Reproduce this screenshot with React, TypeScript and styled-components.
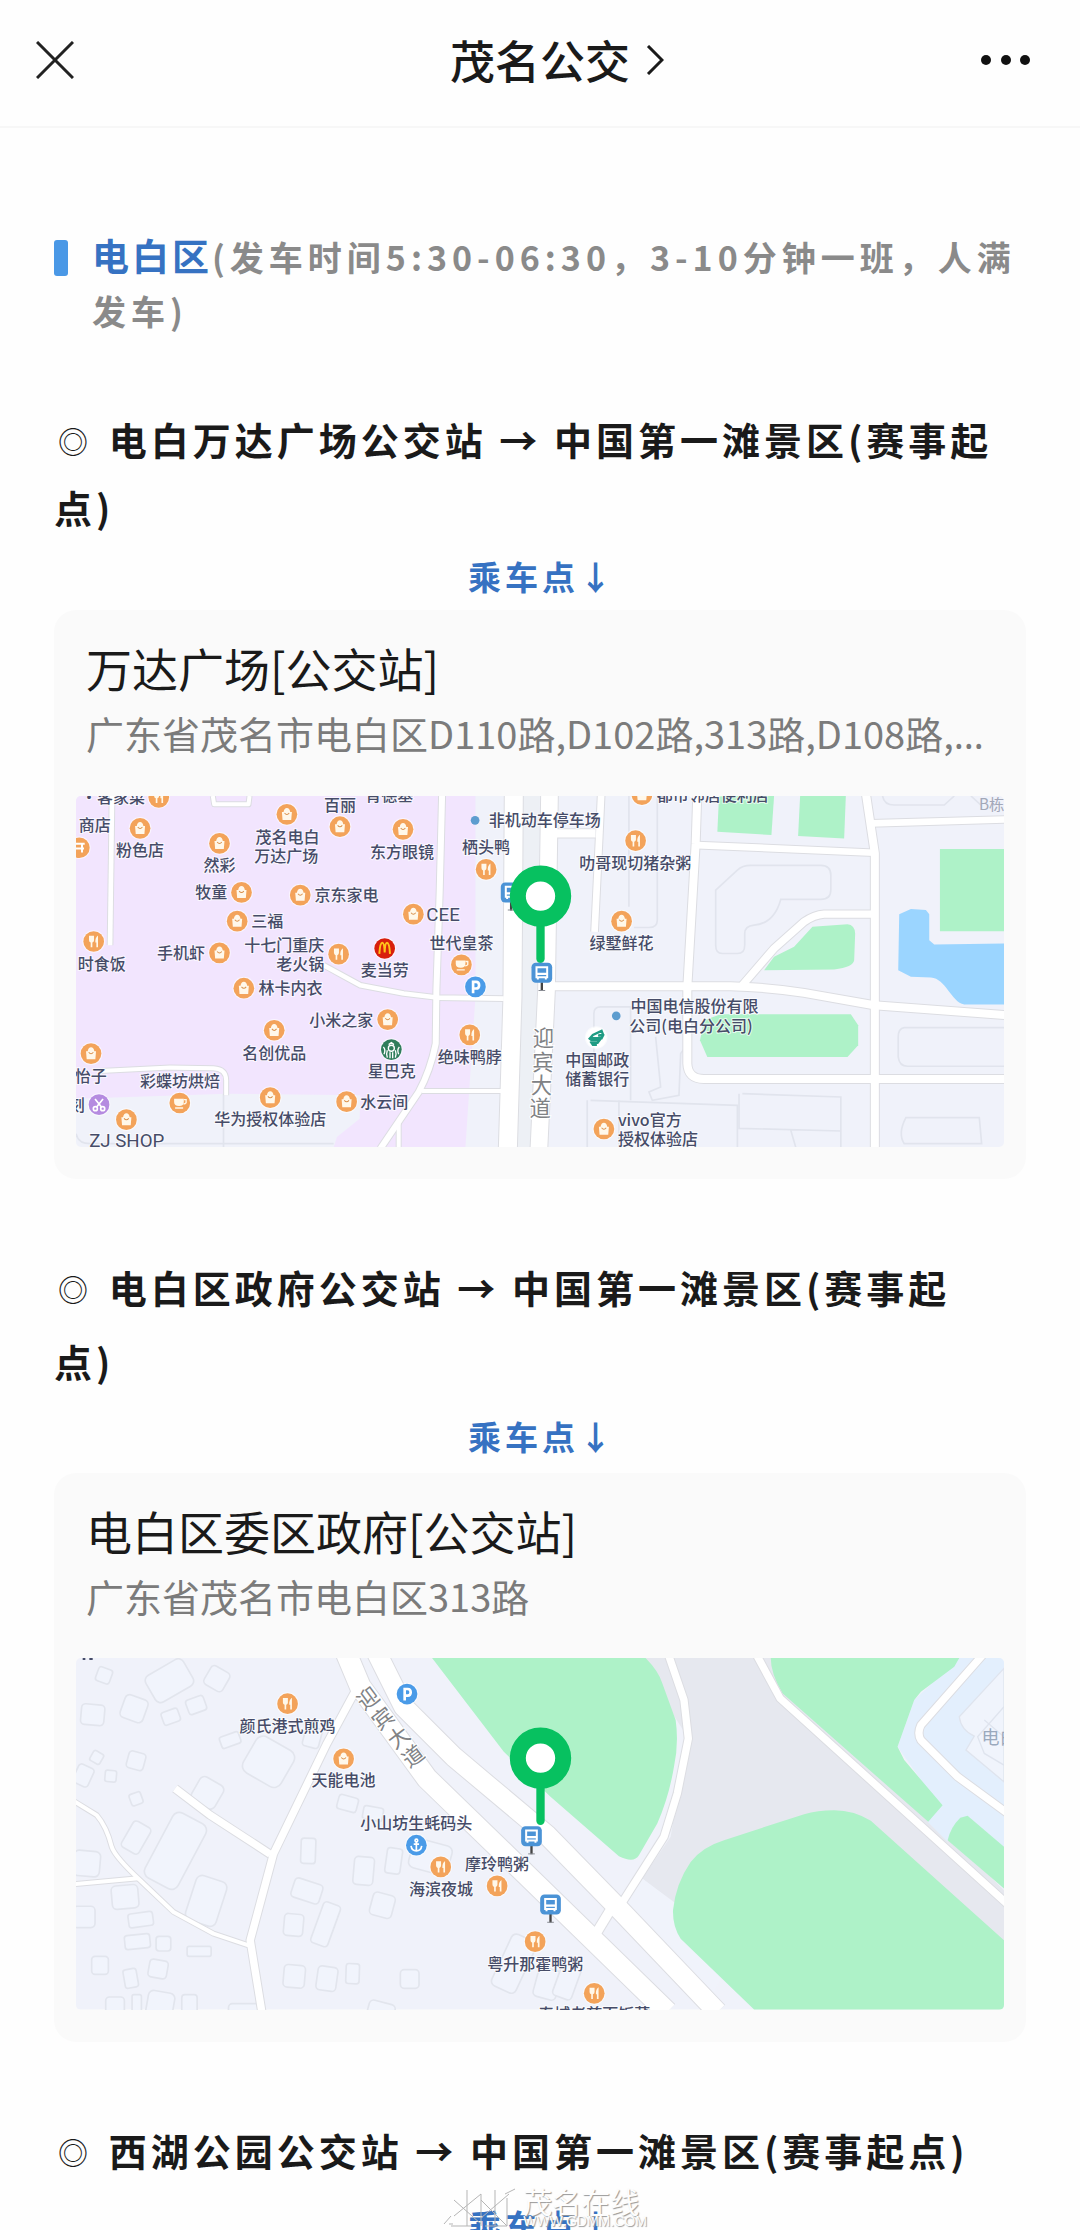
import React from "react";
import styled, { createGlobalStyle } from "styled-components";

const GlobalStyle = createGlobalStyle`
  * { box-sizing: border-box; }
  body {
    margin: 0;
    background: #fefefe;
    color: #1a1a1a;
    font-family: "Noto Sans CJK SC", "Noto Sans", sans-serif;
  }
  h1, h2, h3, p { margin: 0; }
  button { border: 0; background: none; font: inherit; color: inherit; cursor: pointer; }
`;

const Screen = styled.div`
  position: relative;
  display: flex;
  flex-direction: column;
  height: 100vh;
  overflow: hidden;
`;

const TopBar = styled.header`
  display: grid;
  grid-template-columns: 1fr auto 1fr;
  align-items: center;
  flex: none;
  padding: 0 32px 6px;
  height: 128px;
  border-bottom: 2px solid #f7f7f7;
`;

const BarButton = styled.button<{ $end?: boolean }>`
  display: flex;
  padding: ${(p) => (p.$end ? "4px 14px" : "4px")};
  justify-self: ${(p) => (p.$end ? "end" : "start")};
`;

const TitleButton = styled.button`
  display: flex;
  align-items: center;
  gap: 16px;
  padding: 0 0 0 34px;
`;

const AccountName = styled.h1`
  font-size: 45px;
  line-height: 60px;
  font-weight: 500;
`;

const Article = styled.main`
  flex: 1;
  min-height: 0;
  overflow: hidden;
  padding: 100px 54px 0;
`;

const Region = styled.section`
  display: flex;
  gap: 24px;
`;

const RegionBar = styled.span`
  flex: none;
  width: 14px;
  height: 36px;
  margin-top: 12px;
  border-radius: 3px;
  background: #4a98e6;
`;

const RegionTitle = styled.h2`
  font-size: 34px;
  line-height: 54px;
  font-weight: 700;
  letter-spacing: 5px;
  color: #8a8a8a;
`;

const RegionName = styled.span`
  font-size: 37px;
  letter-spacing: 3px;
  color: #3672c2;
`;

const Stop = styled.section<{ $line: number; $gap: number }>`
  margin-top: ${(p) => p.$gap}px;
  line-height: ${(p) => p.$line}px;
`;

const Route = styled.h3`
  padding-right: 24px;
  font-size: 38px;
  font-weight: 700;
  letter-spacing: 4px;
`;

const Bullet = styled.span`
  margin: 0 4px;
  font-size: 30px;
  font-weight: 400;
  line-height: 1;
  vertical-align: 2px;
`;

const Boarding = styled.p`
  padding-top: 1px;
  padding-left: 4px;
  font-size: 33px;
  font-weight: 700;
  letter-spacing: 4px;
  text-align: center;
  color: #3672c2;
`;

const PlaceCard = styled.a`
  display: block;
  padding: 22px 22px 32px;
  border-radius: 22px;
  background: #fafafa;
  color: inherit;
  text-decoration: none;
`;

const PlaceText = styled.div`
  padding: 3px 10px 31px 10px;
`;

const PlaceName = styled.p`
  font-size: 46px;
  line-height: 64px;
`;

const Address = styled.p`
  margin-top: 3px;
  font-size: 38px;
  line-height: 62px;
  color: #7b7b7b;
  white-space: nowrap;
  overflow: hidden;
`;

const More = styled.span`
  font-family: "Noto Sans", sans-serif;
`;

const MapSvg = styled.svg`
  display: block;
  width: 100%;
  height: auto;
  border-radius: 5px;
  font-family: "Noto Sans CJK SC", sans-serif;
`;

const Watermark = styled.div`
  position: absolute;
  left: 0;
  right: 0;
  bottom: 2px;
  display: flex;
  justify-content: center;
  align-items: flex-end;
  gap: 6px;
  padding-left: 10px;
  pointer-events: none;
  color: #fdfdfd;
  text-shadow: 1px 1px 1px #999;
`;

const WatermarkText = styled.div`
  display: flex;
  flex-direction: column;
`;

const WatermarkName = styled.span`
  font-size: 29px;
  line-height: 28px;
`;

const WatermarkUrl = styled.span`
  font-family: "Liberation Sans", sans-serif;
  font-size: 14px;
  line-height: 13px;
`;

/* ---------- map primitives ---------- */

type Pt = string;

const GREEN = "#aef2c8";

function Roads({ items, edge = "#dcdde2" }: { items: [Pt, number][]; edge?: string }) {
  return (
    <g fill="none" strokeLinejoin="round">
      {items.map(([d, w], i) => (
        <path key={"e" + i} d={d} stroke={edge} strokeWidth={w + 6} />
      ))}
      {items.map(([d, w], i) => (
        <path key={"f" + i} d={d} stroke="#fff" strokeWidth={w} />
      ))}
    </g>
  );
}

type Kind = "bag" | "food" | "cup" | "park" | "anchor" | "cut" | "mcd" | "star" | "post" | "cart";

const kindColor: Record<Kind, string> = {
  bag: "#f3a35a",
  food: "#f3a35a",
  cup: "#f3a35a",
  cart: "#f3a35a",
  park: "#4a9be8",
  anchor: "#4a9be8",
  cut: "#b58be0",
  mcd: "#d81f0c",
  star: "#2f7d5b",
  post: "#ffffff",
};

function Poi({ x, y, kind }: { x: number; y: number; kind: Kind }) {
  return (
    <g transform={`translate(${x} ${y})`}>
      <circle r="34" fill="#fff" opacity=".6" />
      <circle r="31" fill={kindColor[kind]} />
      {kind === "bag" && (
        <>
          <path d="M-15 -7 L-13 17 H13 L15 -7 H10 Q8 -19 0 -19 Q-8 -19 -10 -7 Z" fill="#fff8ea" />
          <path d="M-7 -4 Q0 5 7 -4" fill="none" stroke="#d9904c" strokeWidth="3" />
        </>
      )}
      {kind === "food" && (
        <g fill="#fff8ea">
          <path d="M-14 -17 V-4 Q-14 2 -9 3 V17 H-4 V3 Q1 2 1 -4 V-17 Z" />
          <path d="M13 -18 Q4 -12 5 3 H8 V17 H13 Z" />
        </g>
      )}
      {kind === "cup" && (
        <>
          <path d="M-17 -13 H12 V-3 Q12 9 -2 9 Q-17 9 -17 -3 Z M-14 13 H10 V17 H-14 Z" fill="#fff8ea" />
          <path d="M12 -10 H19 V-1 Q17 3 11 3" fill="none" stroke="#fff8ea" strokeWidth="4" />
        </>
      )}
      {kind === "cart" && <path d="M-18 -12 H16 M-12 2 H14 M8 -12 V14" fill="none" stroke="#fff" strokeWidth="6" />}
      {kind === "park" && (
        <path d="M-7 19 V-15 H2 Q11 -15 11 -5 Q11 5 2 5 H-7" fill="none" stroke="#fff" strokeWidth="8" />
      )}
      {kind === "anchor" && (
        <path
          d="M0 -9 V17 M-16 2 Q-14 17 0 17 Q14 17 16 2 M-8 -3 H8 M0 -18 A4 4 0 1 1 0 -10 A4 4 0 1 1 0 -18"
          fill="none"
          stroke="#fff"
          strokeWidth="5"
        />
      )}
      {kind === "cut" && (
        <g fill="none" stroke="#fff" strokeWidth="5">
          <path d="M-12 -17 L8 8 M12 -17 L-8 8" />
          <circle cx="-11" cy="12" r="6" />
          <circle cx="11" cy="12" r="6" />
        </g>
      )}
      {kind === "mcd" && (
        <path d="M-16 16 Q-14 -17 -7 -17 Q-1 -17 0 12 Q1 -17 7 -17 Q14 -17 16 16" fill="none" stroke="#ffc21a" strokeWidth="6" />
      )}
      {kind === "star" && (
        <g fill="none" stroke="#fff" strokeWidth="4">
          <circle cy="-4" r="9" />
          <path d="M-8 -15 L0 -21 L8 -15 M-24 -8 Q-16 0 -22 14 M24 -8 Q16 0 22 14 M-12 2 Q-16 12 -12 24 M12 2 Q16 12 12 24 M-4 8 V26 M4 8 V26" />
        </g>
      )}
      {kind === "post" && (
        <path
          d="M-22 6 L-10 -8 L16 -20 L20 -10 L6 -6 H20 L16 2 H-20 M-18 8 H10 L4 16 H-14 L-10 22 H2"
          fill="none"
          stroke="#1f9c84"
          strokeWidth="7"
        />
      )}
    </g>
  );
}

function Bus({ x, y }: { x: number; y: number }) {
  return (
    <g transform={`translate(${x} ${y})`}>
      <path d="M0 28 V54" stroke="#444" strokeWidth="7" />
      <path d="M-10 53 H10" stroke="#8a8d94" strokeWidth="3" />
      <rect x="-31" y="-30" width="62" height="60" rx="13" fill="#4b93d6" />
      <path d="M-16 -17 H16 V13 H-16 Z M-12 13 V20 M12 13 V20" fill="none" stroke="#fff" strokeWidth="6" />
      <path d="M-16 3 H16" stroke="#fff" strokeWidth="7" />
    </g>
  );
}

function Pin({ y }: { y: number }) {
  return (
    <g transform={`translate(1410 ${y})`}>
      <path d="M0 80 V188" stroke="#07c160" strokeWidth="25" strokeLinecap="round" />
      <circle r="68" fill="#fff" stroke="#07c160" strokeWidth="48" />
    </g>
  );
}

type LabelData = [string, number, number, ("start" | "middle" | "end")?];

function Labels({ items }: { items: LabelData[] }) {
  return (
    <g fontSize="48" fontWeight="500" fill="#464c68" stroke="#fff" strokeOpacity=".7" strokeWidth="6" paintOrder="stroke">
      {items.map(([t, x, y, a = "middle"]) => (
        <text key={t + x} x={x} y={y + 18} textAnchor={a}>
          {t}
        </text>
      ))}
    </g>
  );
}

/* ---------- 万达广场 ---------- */

function WandaMap() {
  return (
    <MapSvg viewBox="18 18 2781 1053" role="img" aria-label="万达广场公交站地图">
      <rect x="18" y="18" width="2781" height="1053" fill="#f0f2fa" />
      <path d="M18 18H1215V620L1185 1071H790L800 1040L868 985L870 915L470 910L18 925Z" fill="#f2e5fe" />
      <g fill={GREEN}>
        <path d="M1945 18H2110L2102 135L1940 125Z" />
        <path d="M2188 18H2325L2320 145L2182 138Z" />
        <path d="M2607 177H2799V423H2607Z" />
        <path d="M2225 410L2330 402Q2352 404 2353 430L2350 510Q2348 530 2290 538L2080 540L2110 500L2170 470Z" />
        <path d="M1900 690L1950 672H2340L2362 705V765L2330 800H1910L1888 750Z" />
      </g>
      <path
        d="M2485 372L2520 357L2565 360L2575 372V450L2590 463L2799 460V643H2680C2640 635 2625 565 2580 562L2520 560L2482 540Z"
        fill="#9bd5ff"
      />
      <g fill="none" stroke="#e1e4ed" strokeWidth="5">
        <path d="M1935 300L2000 240Q2015 226 2040 226H2250Q2280 226 2280 255V300Q2280 328 2250 328H2130Q2110 400 2050 405Q2022 408 2022 430V465Q2022 490 2000 490H1955Q1935 490 1935 465Z" />
        <path d="M1675 18V350M1760 18V390Q1760 412 1735 412H1690" />
        <path d="M1570 880V670Q1570 650 1590 650H1680V930M1550 930V1071M1560 930L2000 945V1071M1645 930V1071" />
        <path d="M1755 740L1770 890L1735 905L1745 930L1825 915L1830 790L1860 750" />
        <path d="M2015 910L2310 920V1071M2005 910V1014L2310 1022M2160 1020L2175 1071" />
        <path d="M2799 712H2500Q2482 715 2482 740V800Q2485 828 2510 828H2799" />
        <path d="M2505 982H2725L2732 1060H2500Q2480 1030 2505 982Z" />
        <path d="M2435 18Q2440 45 2470 45H2620L2650 18M2700 18L2730 45" />
        <path d="M18 1030Q25 1060 60 1060H790M460 910V1071" />
      </g>
      <path d="M1383 18L1377 620L1360 1071" stroke="#edf0f5" strokeWidth="50" fill="none" />
      <Roads
        items={[
          ["M126 18L120 465", 14],
          ["M428 18L432 43L535 43L538 18", 12],
          ["M90 842L300 832L430 834Q468 836 468 870V915", 12],
          ["M760 525L870 585L1000 610L1100 622L1300 625", 14],
          ["M1115 18L1108 300L1098 600L1096 760Q1080 840 1045 905L930 1075", 18],
          ["M1055 902H1295", 12],
          ["M985 1000V1075", 12],
          ["M1330 10L1326 620L1312 1080", 54],
          ["M1437 10L1428 600L1405 1080", 50],
          ["M1450 130H1575", 24],
          ["M1592 10L1586 140L1572 425", 20],
          ["M1880 10L1875 160L1850 590V820Q1852 866 1900 866H2810", 24],
          ["M1440 588H1980Q2100 592 2200 608L2410 645L2810 675", 24],
          ["M1880 165L2410 188", 20],
          ["M2385 10L2412 190V1080", 24],
          ["M2400 100L2810 88", 20],
          ["M2410 372H2260Q2230 374 2200 395L2110 475L2015 585", 22],
        ]}
      />
      <text fontSize="64" fill="#808285" textAnchor="middle" stroke="#fff" strokeWidth="6" paintOrder="stroke">
        <tspan x="1419" y="768">迎</tspan>
        <tspan x="1417" y="838">宾</tspan>
        <tspan x="1413" y="908">大</tspan>
        <tspan x="1409" y="978">道</tspan>
      </text>
      <Poi x={266} y={22} kind="food" />
      <Poi x={210} y={115} kind="bag" />
      <Poi x={28} y={173} kind="cart" />
      <Poi x={448} y={160} kind="bag" />
      <Poi x={650} y={73} kind="bag" />
      <Poi x={809} y={110} kind="bag" />
      <Poi x={998} y={118} kind="bag" />
      <Poi x={1247} y={238} kind="food" />
      <Poi x={514} y={307} kind="bag" />
      <Poi x={690} y={315} kind="bag" />
      <Poi x={501} y={393} kind="bag" />
      <Poi x={1029} y={372} kind="bag" />
      <Poi x={71} y={454} kind="food" />
      <Poi x={448} y={488} kind="bag" />
      <Poi x={805} y={492} kind="food" />
      <Poi x={943} y={475} kind="mcd" />
      <Poi x={1173} y={524} kind="cup" />
      <Poi x={1215} y={590} kind="park" />
      <Poi x={521} y={594} kind="bag" />
      <Poi x={952} y={688} kind="bag" />
      <Poi x={612} y={720} kind="bag" />
      <Poi x={1198} y={734} kind="food" />
      <Poi x={963} y={778} kind="star" />
      <Poi x={63} y={790} kind="bag" />
      <Poi x={87} y={943} kind="cut" />
      <Poi x={329} y={938} kind="cup" />
      <Poi x={169} y={988} kind="bag" />
      <Poi x={600} y={922} kind="bag" />
      <Poi x={829} y={934} kind="bag" />
      <Poi x={1714} y={14} kind="bag" />
      <Poi x={1695} y={152} kind="food" />
      <Poi x={1653} y={393} kind="bag" />
      <Poi x={1577} y={742} kind="post" />
      <Poi x={1600} y={1016} kind="bag" />
      <circle cx="1214" cy="91" r="13" fill="#5d9dcf" />
      <circle cx="1637" cy="677" r="13" fill="#5d9dcf" />
      <Labels
        items={[
          ["·客家菜", 225, 20, "end"],
          ["百丽", 809, 46],
          ["肯德基", 957, 14],
          ["商店", 122, 106, "end"],
          ["粉色店", 210, 180],
          ["然彩", 448, 226],
          ["茂名电白", 652, 140],
          ["万达广场", 648, 198],
          ["东方眼镜", 995, 185],
          ["非机动车停车场", 1255, 90, "start"],
          ["栖头鸭", 1247, 172],
          ["牧童", 471, 307, "end"],
          ["京东家电", 733, 315, "start"],
          ["三福", 543, 393, "start"],
          ["时食饭", 167, 521, "end"],
          ["手机虾", 405, 488, "end"],
          ["十七门重庆", 762, 465, "end"],
          ["老火锅", 762, 521, "end"],
          ["麦当劳", 943, 540],
          ["世代皇茶", 1173, 460],
          ["林卡内衣", 565, 594, "start"],
          ["小米之家", 909, 688, "end"],
          ["名创优品", 612, 787],
          ["绝味鸭脖", 1198, 799],
          ["星巴克", 964, 843],
          ["怡子", 110, 857, "end"],
          ["彩蝶坊烘焙", 330, 873],
          ["刻", 44, 943, "end"],
          ["华为授权体验店", 600, 987],
          ["水云间", 870, 934, "start"],
          ["都市邻居便利店", 1926, 14],
          ["叻哥现切猪杂粥", 1694, 218],
          ["绿墅鲜花", 1653, 458],
          ["中国电信股份有限", 1680, 648, "start"],
          ["公司(电白分公司)", 1676, 706, "start"],
          ["中国邮政", 1580, 808],
          ["储蓄银行", 1580, 865],
          ["vivo官方", 1642, 988, "start"],
          ["授权体验店", 1642, 1045, "start"],
        ]}
      />
      <g fontFamily="Roboto, sans-serif" fontSize="56" fill="#464c68" stroke="#fff" strokeOpacity=".7" strokeWidth="6" paintOrder="stroke">
        <text x="1068" y="392">CEE</text>
        <text x="170" y="1071" textAnchor="middle">
          ZJ SHOP
        </text>
      </g>
      <text x="2800" y="60" fontSize="46" fill="#a2a7b8" textAnchor="end">
        B栋
      </text>
      <Bus x={1322} y={307} />
      <Pin y={318} />
      <Bus x={1414} y={548} />
    </MapSvg>
  );
}

/* ---------- 电白区委区政府 ---------- */

/* x, y, width, height, rotation of each building outline */
const buildings: number[][] = [
  [102, 76, 44, 44, 20], [298, 92, 130, 92, -30], [440, 86, 64, 64, 30], [68, 194, 70, 62, 5],
  [192, 176, 72, 72, 20], [378, 165, 56, 46, -20], [302, 200, 52, 40, -20], [80, 322, 34, 34, 30],
  [198, 332, 52, 52, 15], [122, 378, 34, 34, 5], [40, 376, 50, 60, 25], [198, 446, 36, 36, -20],
  [412, 428, 80, 80, 30], [595, 335, 130, 124, 30], [480, 270, 60, 36, -20], [726, 262, 50, 60, 15],
  [198, 562, 60, 90, 30], [316, 602, 112, 220, 28], [714, 602, 44, 76, 2], [50, 640, 80, 76, 5],
  [408, 752, 96, 140, 18], [710, 722, 88, 60, 18], [165, 740, 80, 70, -5], [42, 800, 66, 64, 0],
  [212, 808, 74, 42, -8], [670, 824, 58, 66, 5], [766, 822, 54, 130, 20], [202, 874, 76, 42, -6],
  [280, 880, 44, 44, 0], [387, 903, 72, 30, 0], [90, 945, 50, 54, 0], [264, 956, 56, 54, 10],
  [182, 984, 40, 56, -10], [672, 978, 64, 68, 5], [770, 985, 60, 72, 8], [847, 970, 40, 60, 2],
  [1018, 986, 56, 56, 0], [880, 662, 60, 84, 5], [970, 632, 46, 76, 8], [936, 765, 68, 70, 15],
  [832, 460, 60, 44, 15], [908, 490, 60, 40, 10], [1080, 620, 120, 90, 15], [135, 1070, 56, 60, 0],
  [200, 1066, 28, 66, 0], [270, 1066, 80, 84, 10], [358, 1066, 46, 66, 0], [525, 1090, 100, 60, 0],
  [930, 1090, 80, 70, 15], [1330, 940, 80, 170, 25], [1430, 1000, 70, 90, 15], [1490, 990, 60, 110, 20],
];

function GovernmentMap() {
  return (
    <MapSvg viewBox="18 24 2781 1053" role="img" aria-label="电白区委区政府公交站地图">
      <rect x="18" y="24" width="2781" height="1053" fill="#f0f2fa" />
      <path d="M1700 24H2100L2799 720V1000L1810 760L1715 685L1800 560L1850 260Z" fill="#e6e8ef" />
      <path d="M1715 685L1810 755L2000 900L1900 1077L1600 770Z" fill="#f0f3fb" />
      <path d="M2665 24H2799V600L2690 497L2630 575L2570 515L2600 460L2480 290L2530 150Z" fill="#e3effd" />
      <g fill={GREEN}>
        <path d="M1085 24H1725Q1765 65 1775 100L1815 210Q1825 280 1810 350Q1795 440 1760 520L1705 615Q1690 640 1645 618L1440 440L1300 305Z" />
        <path d="M2100 24H2665L2650 50L2550 125L2530 150L2480 290L2500 330L2615 465L2572 515L2135 130Q2100 70 2100 24Z" />
        <path d="M2690 497L2799 590V715L2630 570Q2640 530 2668 503Z" />
        <path d="M1807 780Q1815 700 1860 635Q1895 590 1960 570L2200 492Q2240 480 2290 480Q2350 480 2400 512L2799 870V1077H2050L1830 865Q1806 830 1807 780Z" />
      </g>
      <path d="M2799 55L2665 200Q2670 240 2710 258L2685 300L2799 395Z" fill="#f0f4fc" stroke="#dfe4ee" strokeWidth="4" />
      <path d="M2799 170L2720 260L2740 310L2799 345M2740 210L2799 260" fill="none" stroke="#dfe4ee" strokeWidth="4" />
      <g fill="#f1f4fc" stroke="#e2e5ed" strokeWidth="5">
        {buildings.map(([x, y, w, h, r], i) => (
          <rect key={i} x={x - w / 2} y={y - h / 2} width={w} height={h} rx={Math.min(w, h) / 5} transform={`rotate(${r} ${x} ${y})`} />
        ))}
      </g>
      <Roads
        items={[
          ["M10 452L80 495Q110 530 125 590Q135 620 210 690L310 785L430 850L535 885", 12],
          ["M10 702L205 684", 12],
          ["M315 415L420 495L600 612", 22],
          ["M862 110L770 280L610 610L540 870L575 1085", 22],
          ["M828 10L870 110L1070 385L1395 700L1790 1085", 62],
          ["M920 10L1000 170L1150 320L1430 555L1640 770L1940 1085", 58],
          ["M1625 770L1570 860", 28],
          ["M1792 10L1840 150L1853 265L1820 430L1780 560L1640 780", 22],
          ["M2055 10L2128 145L2810 762", 22],
          ["M2735 15L2550 225Q2538 250 2550 270L2660 380L2810 490", 22],
        ]}
      />
      <g fontSize="64" fill="#808285" textAnchor="middle" stroke="#fff" strokeWidth="6" paintOrder="stroke">
        {(
          [
            ["迎", 893, 145],
            ["宾", 938, 205],
            ["大", 985, 262],
            ["道", 1028, 318],
          ] as [string, number, number][]
        ).map(([c, x, y]) => (
          <text key={c} y="23" transform={`translate(${x} ${y}) rotate(-37)`}>
            {c}
          </text>
        ))}
      </g>
      <Poi x={652} y={161} kind="food" />
      <Poi x={1010} y={132} kind="park" />
      <Poi x={820} y={326} kind="bag" />
      <Poi x={1038} y={585} kind="anchor" />
      <Poi x={1111} y={650} kind="food" />
      <Poi x={1280} y={707} kind="food" />
      <Poi x={1394} y={874} kind="food" />
      <Poi x={1571} y={1029} kind="food" />
      <Labels
        items={[
          ["颜氏港式煎鸡", 652, 228],
          ["天能电池", 820, 391],
          ["小山坊生蚝码头", 1038, 519],
          ["摩玲鸭粥", 1280, 641],
          ["海滨夜城", 1112, 716],
          ["粤升那霍鸭粥", 1394, 941],
          ["春城老慈面饭菜", 1571, 1092],
        ]}
      />
      <path d="M38 27H46M58 27H68" stroke="#464c68" strokeWidth="6" />
      <text x="2732" y="281" fontSize="54" fill="#9aa9bd">
        电白
      </text>
      <Bus x={1383} y={558} />
      <Bus x={1440} y={763} />
      <Pin y={324} />
    </MapSvg>
  );
}

/* ---------- page ---------- */

interface StopData {
  from: string;
  line: number;
  gap: number;
  place?: string;
  address?: React.ReactNode;
  map?: React.ReactNode;
}

const stops: StopData[] = [
  {
    from: "电白万达广场公交站",
    line: 68,
    gap: 67,
    place: "万达广场[公交站]",
    address: (
      <>
        广东省茂名市电白区D110路,D102路,313路,D108路,<More>…</More>
      </>
    ),
    map: <WandaMap />,
  },
  {
    from: "电白区政府公交站",
    line: 74,
    gap: 71,
    place: "电白区委区政府[公交站]",
    address: "广东省茂名市电白区313路",
    map: <GovernmentMap />,
  },
  { from: "西湖公园公交站", line: 74, gap: 71 },
];

export default function App() {
  return (
    <Screen>
      <GlobalStyle />
      <TopBar>
        <BarButton aria-label="关闭">
          <svg width="38" height="38" viewBox="0 0 38 38" fill="none" stroke="#222" strokeWidth="3">
            <path d="M1 1L37 37M37 1L1 37" />
          </svg>
        </BarButton>
        <TitleButton>
          <AccountName>茂名公交</AccountName>
          <svg width="18" height="30" viewBox="0 0 18 30" fill="none" stroke="#1a1a1a" strokeWidth="3">
            <path d="M2 1L16 15L2 29" />
          </svg>
        </TitleButton>
        <BarButton $end aria-label="更多">
          <svg width="56" height="12" viewBox="0 0 56 12" fill="#111">
            <circle cx="8" cy="6" r="5" />
            <circle cx="28" cy="6" r="5" />
            <circle cx="47" cy="6" r="5" />
          </svg>
        </BarButton>
      </TopBar>
      <Article>
        <Region>
          <RegionBar />
          <RegionTitle>
            <RegionName>电白区</RegionName>(发车时间5:30-06:30，3-10分钟一班，人满发车)
          </RegionTitle>
        </Region>
        {stops.map((s) => (
          <Stop key={s.from} $line={s.line} $gap={s.gap}>
            <Route>
              <Bullet>◎</Bullet> {s.from} → 中国第一滩景区(赛事起点)
            </Route>
            <Boarding>乘车点↓</Boarding>
            {s.place && (
              <PlaceCard href="#map">
                <PlaceText>
                  <PlaceName>{s.place}</PlaceName>
                  <Address>{s.address}</Address>
                </PlaceText>
                {s.map}
              </PlaceCard>
            )}
          </Stop>
        ))}
      </Article>
      <Watermark>
        <svg width="74" height="40" viewBox="0 0 74 40" fill="none" stroke="#b5b5b5" strokeWidth="1">
          <path d="M11 12L38 36M11 28L38 6M24 2V38M38 6V38M52 2V38M38 12L64 38M38 30L66 6M64 10V38M8 38H28M42 38H64M62 6L72 1M1 36L8 28M6 36H10" />
        </svg>
        <WatermarkText>
          <WatermarkName>茂名在线</WatermarkName>
          <WatermarkUrl>WWW.GDMM.COM</WatermarkUrl>
        </WatermarkText>
      </Watermark>
    </Screen>
  );
}
